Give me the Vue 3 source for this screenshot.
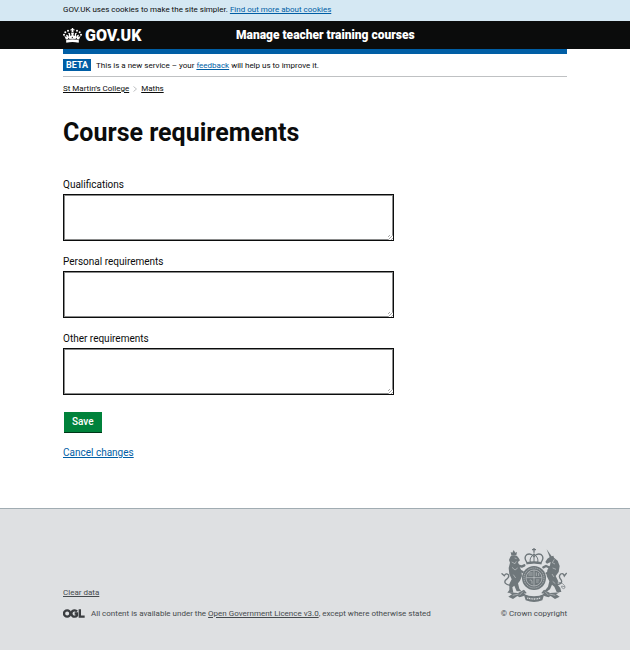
<script setup>
import { reactive } from 'vue'

const fields = reactive([
  { id: 'qualifications', label: 'Qualifications', value: '' },
  { id: 'personal', label: 'Personal requirements', value: '' },
  { id: 'other', label: 'Other requirements', value: '' },
])
</script>

<template>
  <div class="page">
    <div class="cookies">
      <p class="wrap">GOV.UK uses cookies to make the site simpler. <a href="#">Find out more about cookies</a></p>
    </div>

    <header class="header">
      <div class="wrap header-row">
        <a class="logo" href="#">
          <svg class="crown" viewBox="39 81 57 45" aria-hidden="true">
            <g fill="#fff">
              <path d="M65 81h5l-1 4 4-1v5l-4-1 2 6h-7l2-6-4 1v-5l4 1z" />
              <circle cx="54" cy="89" r="3" /><circle cx="81" cy="89" r="3" />
              <circle cx="46" cy="94" r="3" /><circle cx="89" cy="94" r="3" />
              <circle cx="42" cy="101" r="3" /><circle cx="93" cy="101" r="3" />
              <path d="M43 104l7 5-2-8 5 1 2 6 2-7-3-6 6 2 1 8 4-2-2-8h9l-2 8 4 2 1-8 6-2-3 6 2 7 2-6 5-1-2 8 7-5-5 12H48z" />
              <path d="M48 118q19-5 39 0l-1 7q-19-4-37 0z" />
            </g>
            <g fill="#0b0c0c">
              <circle cx="56" cy="112" r="2" /><circle cx="67" cy="109" r="2" /><circle cx="79" cy="112" r="2" />
              <path d="M47 116q20-6 41 0v1q-21-5-41 0z" />
            </g>
          </svg>
          <span>GOV.UK</span>
        </a>
        <a class="service" href="#">Manage teacher training courses</a>
      </div>
    </header>

    <div class="wrap body">
      <div class="bar"></div>
      <div class="phase">
        <strong class="tag">BETA</strong>
        <span>This is a new service – your <a href="#">feedback</a> will help us to improve it.</span>
      </div>

      <nav class="crumbs" aria-label="Breadcrumb">
        <a href="#">St Martin’s College</a>
        <svg class="chevron" viewBox="0 0 4 6" aria-hidden="true"><path d="M0.5 0.5L3.5 3L0.5 5.5" /></svg>
        <a href="#">Maths</a>
      </nav>

      <main>
        <h1>Course requirements</h1>
        <form @submit.prevent>
          <div v-for="field in fields" :key="field.id" class="group">
            <label :for="field.id">{{ field.label }}</label>
            <textarea :id="field.id" v-model="field.value"></textarea>
          </div>
          <button type="submit">Save</button>
        </form>
        <p class="cancel"><a href="#">Cancel changes</a></p>
      </main>
    </div>

    <footer class="footer">
      <div class="wrap footer-row">
        <div class="meta">
          <a href="#">Clear data</a>
          <div class="licence">
            <svg class="ogl" viewBox="0 0 66 27" role="img" aria-label="Open Government Licence">
              <g fill="none" stroke="#3a3d40" stroke-width="7">
                <circle cx="12.500" cy="13.500" r="9.500" />
                <path d="M42 7.500A9.500 9.500 0 1 0 42 19.500V13.500H35" />
                <path d="M50.500 0.500V23H65" />
              </g>
            </svg>
            <span>All content is available under the <a href="#">Open Government Licence v3.0</a>, except where otherwise stated</span>
          </div>
        </div>
        <a class="crown-copy" href="#">
          <svg class="crest" viewBox="33 24 198 162" aria-hidden="true">
            <!-- crown -->
            <g fill="none" stroke="#6f777b" stroke-width="4">
              <path d="M132 24v14M126 29h12" />
              <path d="M111 68Q100 52 110 44Q122 38 132 50Q142 38 154 44Q164 52 153 68" />
              <path d="M132 40v26M121 66q-4-12 11-24M143 66q4-12-11-24" stroke-width="3" />
              <path d="M109 70q23-5 46 0" stroke-width="7" />
            </g>
            <!-- shield and garter -->
            <circle cx="132" cy="114" r="36" fill="#6f777b" />
            <!-- lion -->
            <g fill="#6f777b">
              <path d="M62 36l5 2 4-8 5 8 5-2-2 10H64z" />
              <path d="M61 50Q64 45 72 46Q82 45 86 54L90 61L84 66L88 78L94 92L96 108L90 122L84 130L88 146L94 154H80L73 137L67 142L70 158H52L58 150L58 132L65 118L58 102L56 84L60 68L57 60z" />
            </g>
            <!-- unicorn -->
            <g fill="#6f777b">
              <path d="M170 28L186 50L180 54z" />
              <path d="M181 50L190 47L192 53L203 62L209 78L206 96L197 108L204 122L203 134L211 144L214 156H200L193 140L186 134L180 148L172 154H163L174 140L178 124L170 108L172 90L180 76L182 66L171 71L166 66L172 56z" />
            </g>
            <g fill="none" stroke="#6f777b" stroke-width="7" stroke-linecap="round" stroke-linejoin="round">
              <path d="M84 76L95 80L103 76M86 90L98 96" />
              <path d="M182 84L168 78L160 82M182 96L170 100" />
            </g>
            <g fill="none" stroke="#6f777b" stroke-width="4" stroke-linecap="round">
              <path d="M60 136Q40 132 46 121Q60 112 55 104Q48 98 43 107L36 101" />
              <path d="M202 134Q220 130 213 119Q204 110 212 102Q220 98 223 108L229 100" />
              <path stroke-width="2" d="M204 126q16 3 20 11 4 9-4 9-7-2-5-8l8 2" />
            </g>
            <!-- ribbon -->
            <g fill="#6f777b">
              <path d="M54 157l30 2 18-10 8 10-9 9-12 4-7-4-13 9-14-7 11-7zM210 157l-30 2-18-10-8 10 9 9 12 4 7-4 13 9 14-7-11-7z" />
              <path d="M101 162q31 14 62 0l-6 19q-25 10-50 0z" />
            </g>
            <g fill="none" stroke="#dee0e2" stroke-width="1.500">
              <circle cx="132" cy="114" r="30" stroke-dasharray="4 2" />
              <circle cx="132" cy="114" r="24" />
              <path d="M132 91v46M109 113h46M115 99h13M115 105h13M119 121q8-5 7 10M139 97v11M146 99v9M138 120h10M138 126h8" />
              <path d="M74 54l6 2M65 66l10 5 4-7M66 82l9 8 8-6M70 104l7 10" />
              <path d="M193 58l-6 10 8 4M188 84l10 4M186 102l6 9M188 124l8 7" />
              <path d="M68 166l18-4M88 166l11-11M196 166l-18-4M176 166l-11-11" />
              <path stroke-width="4" stroke-dasharray="3 2" d="M112 174q20 6 40 0" />
              <path stroke-width="2" d="M103 160q29 12 58 0" />
              <path d="M109 75q23-5 46 0" />
            </g>
          </svg>
          <span>© Crown copyright</span>
        </a>
      </div>
    </footer>
  </div>
</template>

<style>
body {
  margin: 0;
  background: #dee0e2;
}
</style>

<style scoped>
.page {
  background: #fff;
  color: #0b0c0c;
  font-family: Roboto, "Liberation Sans", sans-serif;
  font-size: 8px;
  line-height: 13px;
}
.wrap {
  margin: 0 10%;
}
a {
  color: #005ea5;
}
.cookies {
  display: flow-root;
  padding: 3px 0 5px;
  background: #d5e8f3;
}
.header {
  background: #0b0c0c;
}
.header-row {
  display: grid;
  grid-template-columns: 173px 1fr;
  align-items: center;
  height: 28px;
}
.header a {
  color: #fff;
  text-decoration: none;
  font-weight: 900;
}
.logo {
  display: flex;
  align-items: center;
  gap: 3px;
  font-size: 16px;
}
.crown {
  width: 19px;
  height: 15px;
}
.service {
  font-size: 12px;
}
.bar {
  height: 5px;
  background: #005ea5;
}
.phase {
  display: flex;
  align-items: center;
  gap: 5px;
  height: 22px;
  border-bottom: 1px solid #bfc1c3;
}
.tag {
  padding: 0 3px;
  background: #005ea5;
  color: #fff;
  font-size: 9px;
  font-weight: 700;
  line-height: 12px;
}
.crumbs {
  display: flex;
  align-items: center;
  gap: 4px;
  margin-top: 5px;
}
.crumbs a {
  color: #0b0c0c;
}
.chevron {
  width: 4px;
  height: 6px;
  fill: none;
  stroke: #bfc1c3;
}
h1 {
  margin: 23px 0 30px;
  font-size: 25px;
  line-height: 30px;
  font-weight: 700;
}
.group {
  margin-bottom: 14px;
}
label {
  display: block;
  margin-bottom: 2px;
  font-size: 10px;
  line-height: 14px;
}
textarea {
  display: block;
  box-sizing: border-box;
  width: calc(66% - 2px);
  height: 47px;
  padding: 3px;
  border: 1px solid #0b0c0c;
  border-radius: 0;
  box-shadow: inset 0 0 0 1px #8a8b8b;
  background: #fff;
  font: inherit;
  font-size: 10px;
  resize: vertical;
}
textarea::-webkit-resizer {
  background: repeating-linear-gradient(135deg, #fff 0 1px, #aaa 1px 2px) right bottom / 5px 5px no-repeat;
}
button {
  display: block;
  margin: 17px 0 0 1px;
  padding: 3px 8px;
  border: 0;
  border-radius: 0;
  background: #00823b;
  box-shadow: 0 1px 0 #003618;
  color: #fff;
  font: inherit;
  font-size: 10px;
  line-height: 14px;
  font-weight: 500;
}
.cancel {
  margin: 14px 0 48px;
  font-size: 10px;
  line-height: 14px;
}
.footer {
  border-top: 1px solid #a1acb2;
  background: #dee0e2;
  color: #454a4d;
}
.footer a {
  color: #454a4d;
}
.footer-row {
  display: flex;
  justify-content: space-between;
  align-items: flex-end;
  padding: 39px 0 30px;
}
.meta {
  display: flex;
  flex-direction: column;
  align-items: flex-start;
  gap: 8px;
}
.licence {
  display: flex;
  align-items: center;
  gap: 6px;
}
.ogl {
  width: 22px;
  height: 9px;
}
.footer .crown-copy {
  display: flex;
  flex-direction: column;
  align-items: flex-end;
  gap: 5px;
  text-decoration: none;
}
.crest {
  width: 66px;
  height: 54px;
}
</style>
